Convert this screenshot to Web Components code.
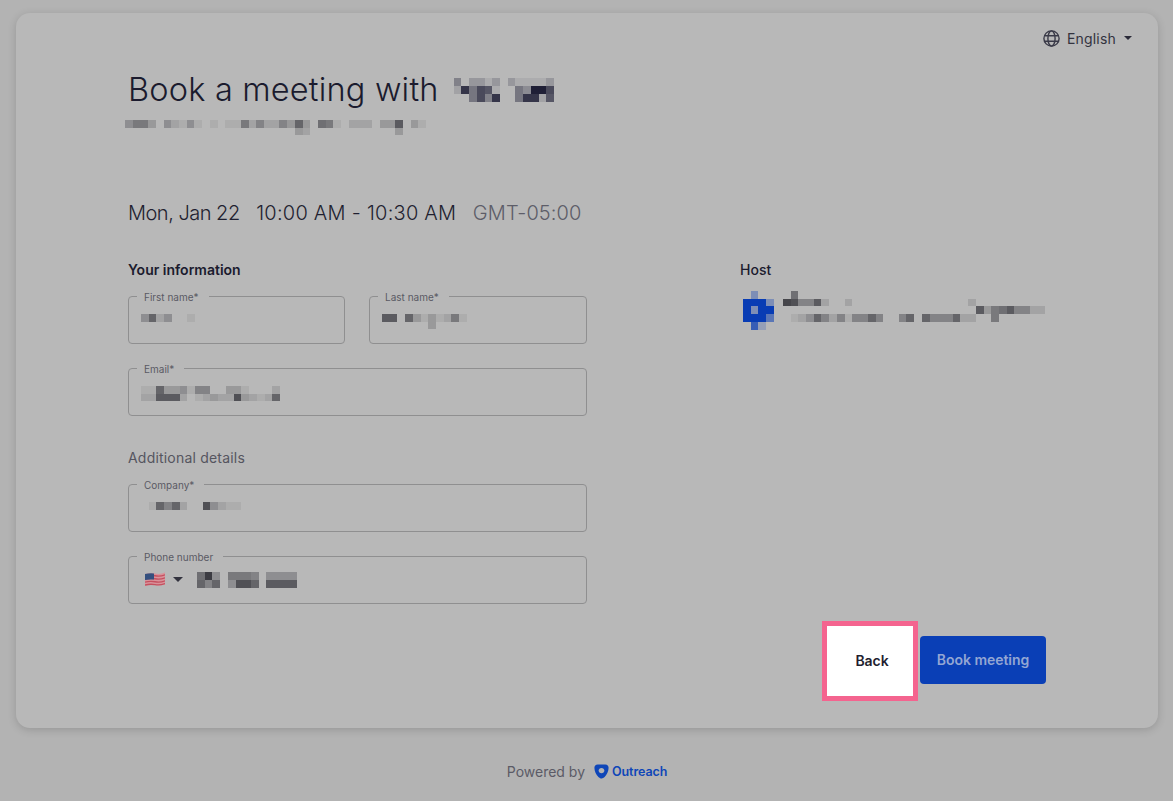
<!doctype html>
<html><head><meta charset="utf-8"><title>Book a meeting</title>
<style>
html,body{margin:0;height:801px;overflow:hidden;background:#b3b3b3;font-family:Inter,"Liberation Sans",sans-serif;color:#1b1b2e}
</style></head><body>
<booking-page></booking-page>
<script>
function el(name, html){
  customElements.define(name, class extends HTMLElement{
    constructor(){super();this.attachShadow({mode:'open'}).innerHTML=html;}
  });
}
customElements.define('px-mosaic', class extends HTMLElement{
  constructor(){super();this.attachShadow({mode:'open'});}
  connectedCallback(){
    const rows=(this.getAttribute('rows')||'').split(',');
    const cell=this.getAttribute('cell')||'7.72';
    const rgb=this.getAttribute('rgb')||'28,28,36';
    const cols=Math.max(...rows.map(r=>r.length));
    let h=`<style>:host{display:block;flex:none;width:${cols*cell}px;height:${rows.length*cell}px}
    .g{display:grid;grid-template-columns:repeat(${cols},${cell}px);grid-auto-rows:${cell}px}</style><div class="g">`;
    for(const r of rows){for(let i=0;i<cols;i++){const v=parseInt(r[i]||'0',16);
      h+=`<div style="background:rgba(${rgb},${(v/15).toFixed(3)})"></div>`;}}
    this.shadowRoot.innerHTML=h+'</div>';
  }
});
el('lang-switch',`<style>
:host{display:flex;justify-content:flex-end;align-items:center;gap:7px;height:20px;font-size:14px;letter-spacing:.2px;color:#33333f}
svg{display:block}
.c{width:0;height:0;border-left:4.5px solid transparent;border-right:4.5px solid transparent;border-top:4.5px solid #2a2a38;margin-left:1px}
</style>
<svg width="17" height="17" viewBox="0 0 17 17" fill="none" stroke="#3a3a48" stroke-width="1.4"><circle cx="8.5" cy="8.5" r="7.6"/><ellipse cx="8.5" cy="8.5" rx="3.6" ry="7.6"/><path d="M1.5 5.8h14M1.5 11.2h14"/></svg>
<span>English</span><span class="c"></span>`);
el('form-field',`<style>
:host{display:block;min-width:0}
fieldset{box-sizing:border-box;height:55px;margin:0;padding:10px 12px 0;border:1px solid #8f8f90;border-radius:4px;min-width:0}
legend{margin-left:-4px;padding:2px 10px 1px 7px;font-size:10px;line-height:12px;letter-spacing:0;color:#5a5a64}
</style><fieldset><legend><slot name="label"></slot></legend><slot></slot></fieldset>`);
el('pill-button',`<style>
:host{display:flex;align-items:center;justify-content:center;box-sizing:border-box;font-size:14px;font-weight:600;letter-spacing:-.05px}
:host([kind=back]){width:96px;height:80px;padding-left:4px;background:#fff;border:5px solid #f4648f;color:#1f1f30}
:host([kind=primary]){width:126px;height:48px;margin-bottom:2px;border-radius:4px;background:#0a3fb6;color:#93a6d3}
</style><slot></slot>`);
el('us-flag',`<style>:host{display:block;flex:none}svg{display:block}</style>
<svg width="20" height="15" viewBox="0 0 20 15"><path d="M0 2Q5 .6 10 1.6T20 .6V12.6Q15 14 10 13T0 14Z" fill="#d9929a"/>
<g stroke="#c4505f" stroke-width="1.4" fill="none"><path d="M0 4.200Q5 2.800 10 3.800T20 2.800"/><path d="M0 7.200Q5 5.800 10 6.800T20 5.800"/><path d="M0 10.200Q5 8.800 10 9.800T20 8.800"/><path d="M0 13Q5 11.800 10 12.600T20 11.600"/></g>
<path d="M0 2Q4 .9 9 1.400V7.600Q4 7.200 0 8Z" fill="#34507f"/></svg>`);
el('phone-value',`<style>:host{display:flex;align-items:center;margin:-2px 0 0 4px;height:16px}
.c{width:0;height:0;border-left:5px solid transparent;border-right:5px solid transparent;border-top:5px solid #33333f;margin-left:8px;margin-right:14px}
</style><us-flag></us-flag><span class="c"></span><slot></slot>`);
el('host-card',`<style>
:host{display:block}
h3{margin:0 0 13px;font-size:14px;line-height:17px;font-weight:500;color:#1b1b2e}
.r{display:flex;gap:9px;margin-left:3px}
</style><h3>Host</h3><div class="r">
<px-mosaic rows="0500,fff5,f5ff,fff8,0b30" rgb="8,60,180"></px-mosaic>
<px-mosaic rows="07,BA55920020000000000000002,0000000000000000000000000936795522,0124852515585005808555822006"></px-mosaic>
</div>`);
el('powered-by',`<style>
:host{display:flex;justify-content:center;align-items:center;gap:9px;padding-left:1px;font-size:14px;letter-spacing:0;color:#5b5b66;height:20px}
.l{display:flex;align-items:center;gap:3px;color:#0f46b8;font-weight:600;font-size:12.5px;letter-spacing:-.1px}
svg{display:block}
</style><span>Powered by</span><span class="l"><svg width="15" height="15" viewBox="0 0 15 15"><path fill="#0f46b8" fill-rule="evenodd" d="M3.6 .6h7.8c1.9 0 3.2 1.3 3.2 3.2 0 3.300-1.700 7-4 9.200-.9.900-1.800 1.400-3 1.400-1.300 0-2.300-.6-3.200-1.500C2 10.600 .4 7.100 .4 3.800 .4 1.900 1.700 .6 3.600 .6ZM7.500 3.900c-1.600 0-2.900 1.200-2.900 2.700s1.300 2.700 2.900 2.700 2.900-1.200 2.900-2.700-1.300-2.700-2.900-2.700Z"/></svg><span>Outreach</span></span>`);
el('booking-page',`<style>
:host{display:block;padding-top:13px}
.card{box-sizing:border-box;height:715px;margin:0 15px 0 16px;padding:15px 26px 0 112px;background:#b8b8b8;border-radius:14px;box-shadow:0 2px 8px rgba(0,0,0,.16)}
h1{margin:20px 0 0;font-size:32.5px;line-height:44px;font-weight:300;letter-spacing:.19px;color:#1b1b2e;display:flex;align-items:center;gap:15px}
.sub{margin:8px 0 0 -3px}
.when{margin:63.56px 0 0;font-size:20px;line-height:28px;font-weight:300;color:#1f1f30;display:flex;gap:16.5px}
.when .d{letter-spacing:-.5px}
.when .t{letter-spacing:.25px}
.when .g{letter-spacing:.1px;color:#5d5d68}
.main{display:grid;grid-template-columns:459px 1fr;column-gap:153px;margin-top:34px;padding-right:86px}
h2{margin:0;font-size:14px;line-height:17px;font-weight:600;color:#1b1b2e}
.fields{display:grid;grid-template-columns:217px 218px;gap:17px 24px;margin-top:11px}
.wide{grid-column:1/3}
h4{grid-column:1/3;margin:15px 0 -8px;font-size:14px;line-height:20px;font-weight:400;letter-spacing:.2px;color:#55555f}
.actions{display:flex;justify-content:flex-end;align-items:center;gap:2px;margin:17px 86px 0 0}
footer{margin-top:33px}
</style>
<div class="card">
<lang-switch></lang-switch>
<h1><span>Book a meeting with</span><px-mosaic rgb="20,20,45" rows="5033130311113,2C6A910064EEA,006A5C006CC29"></px-mosaic></h1>
<px-mosaic class="sub" rows="466304214101011625225383076102220339031,0000000000000000000000320000000000030"></px-mosaic>
<div class="when"><span class="d">Mon, Jan 22</span><span class="t">10:00 AM - 10:30 AM</span><span class="g">GMT-05:00</span></div>
<div class="main">
<section><h2>Your information</h2>
<div class="fields">
<form-field><span slot="label">First name*</span><px-mosaic rows="4824001"></px-mosaic></form-field>
<form-field><span slot="label">Last name*</span><px-mosaic rows="99083131261,0000003"></px-mosaic></form-field>
<form-field class="wide"><span slot="label">Email*</span><px-mosaic rows="118334155003310002,229992012322A32128"></px-mosaic></form-field>
<h4>Additional details</h4>
<form-field class="wide"><span slot="label">Company*</span><px-mosaic rows="01858200A4211"></px-mosaic></form-field>
<form-field class="wide"><span slot="label">Phone number</span><phone-value><px-mosaic rows="7C40666504444,85804AA809999"></px-mosaic></phone-value></form-field>
</div></section>
<host-card></host-card>
</div>
<div class="actions"><pill-button kind="back">Back</pill-button><pill-button kind="primary">Book meeting</pill-button></div>
</div>
<footer><powered-by></powered-by></footer>`);
</script>
</body></html>
